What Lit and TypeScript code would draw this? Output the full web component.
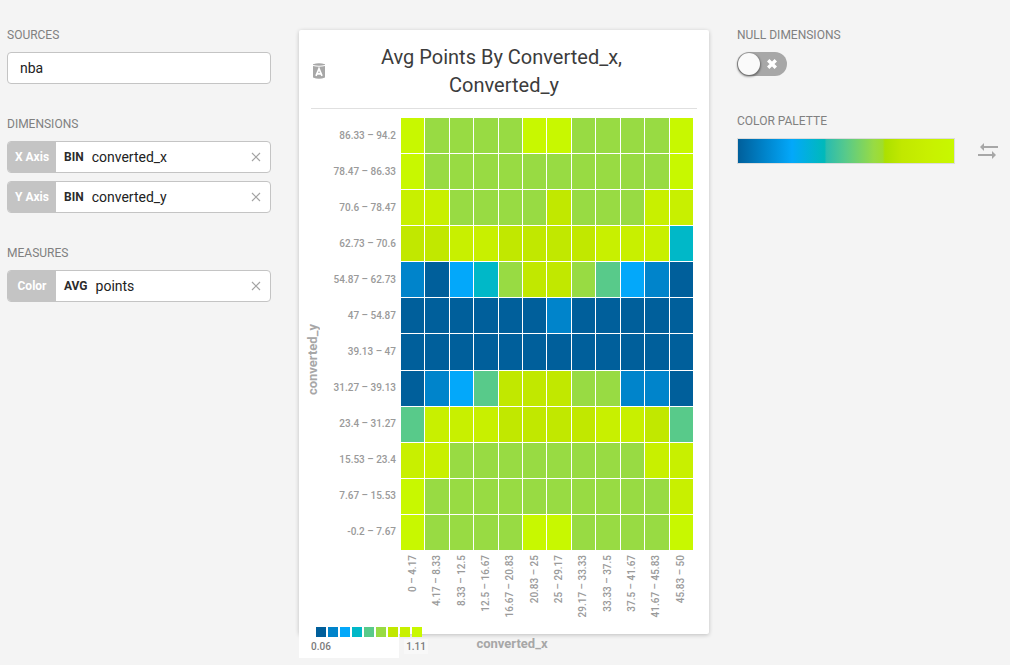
import { LitElement, html, css } from "lit";
import { customElement, property, state } from "lit/decorators.js";

const PALETTE = [
  "#005f9b", "#0084cb", "#03a8fa", "#00b8c8", "#58ca8a",
  "#98db43", "#c1e800", "#c8f000", "#c8f800",
];

// One digit per cell: the 1-based palette step, rows from top to bottom.
const ROWS = [
  { label: "86.33 – 94.2", cells: "966669966669" },
  { label: "78.47 – 86.33", cells: "966666666669" },
  { label: "70.6 – 78.47", cells: "886666766688" },
  { label: "62.73 – 70.6", cells: "778877778884" },
  { label: "54.87 – 62.73", cells: "213467765321" },
  { label: "47 – 54.87", cells: "111111211111" },
  { label: "39.13 – 47", cells: "111111111111" },
  { label: "31.27 – 39.13", cells: "123577766221" },
  { label: "23.4 – 31.27", cells: "588877778875" },
  { label: "15.53 – 23.4", cells: "886666666688" },
  { label: "7.67 – 15.53", cells: "966666666668" },
  { label: "-0.2 – 7.67", cells: "966669966669" },
];

const COLUMNS = [
  "0 – 4.17", "4.17 – 8.33", "8.33 – 12.5", "12.5 – 16.67", "16.67 – 20.83", "20.83 – 25",
  "25 – 29.17", "29.17 – 33.33", "33.33 – 37.5", "37.5 – 41.67", "41.67 – 45.83", "45.83 – 50",
];

@customElement("field-pill")
export class FieldPill extends LitElement {
  @property() role_ = "";
  @property() fn = "";
  @property() field = "";

  static styles = css`
    :host { display: block; }
    .pill {
      display: flex;
      align-items: stretch;
      box-sizing: border-box;
      height: 32px;
      border: 1px solid #c4c4c4;
      border-radius: 4px;
      overflow: hidden;
      background: #fff;
    }
    .tag {
      display: flex;
      align-items: center;
      justify-content: center;
      flex: none;
      width: 48px;
      background: #c4c4c4;
      color: #fff;
      font-size: 12px;
      font-weight: 700;
    }
    button { border: 0; padding: 0; background: none; font: inherit; color: inherit; cursor: pointer; }
    .fn { padding: 0 8px; font-size: 12px; font-weight: 700; color: #2b2b2b; }
    .field { flex: 1; text-align: left; font-size: 14px; color: #222; }
    .remove { display: flex; align-items: center; justify-content: center; width: 28px; }
    .remove svg { width: 10px; height: 10px; }
  `;

  render() {
    return html`
      <div class="pill">
        <span class="tag">${this.role_}</span>
        <button class="fn" type="button">${this.fn}</button>
        <button class="field" type="button">${this.field}</button>
        <button class="remove" type="button" aria-label="Remove ${this.field}">
          <svg viewBox="0 0 10 10" fill="none" stroke="#a4a4a4" stroke-width="1.2">
            <path d="M1 1l8 8M9 1l-8 8" />
          </svg>
        </button>
      </div>
    `;
  }
}

@customElement("heat-map")
export class HeatMap extends LitElement {
  static styles = css`
    :host { display: block; }
    .chart {
      display: grid;
      grid-template-columns: 16px 74px 1fr;
      padding-right: 4px;
    }
    .y-title {
      grid-row: 1 / 3;
      align-self: center;
      justify-self: center;
      margin-right: 12px;
      margin-bottom: 32px;
      writing-mode: vertical-rl;
      transform: rotate(180deg);
      font-size: 13px;
      line-height: 16px;
      font-weight: 700;
      color: #a7a7a7;
    }
    .y-ticks, .cells { display: grid; grid-template-rows: repeat(12, 1fr); height: 432px; }
    .y-ticks, .x-ticks {
      font-size: 10px;
      line-height: 12px;
      font-weight: 500;
      color: #9a9a9a;
      white-space: nowrap;
    }
    .y-ticks { justify-items: end; align-items: center; padding-right: 5px; }
    .cells, .x-ticks { grid-template-columns: repeat(12, 1fr); }
    .cells { gap: 1px; }
    .x-ticks { grid-column: 3; display: grid; height: 84px; justify-items: center; align-items: start; }
    .x-tick { margin-top: 5px; writing-mode: vertical-rl; transform: rotate(180deg); }
  `;

  render() {
    return html`
      <div class="chart">
        <div class="y-title">converted_y</div>
        <div class="y-ticks">${ROWS.map((r) => html`<span>${r.label}</span>`)}</div>
        <div class="cells">
          ${ROWS.map((r) =>
            [...r.cells].map((c) => html`<div style="background:${PALETTE[Number(c) - 1]}"></div>`)
          )}
        </div>
        <div class="x-ticks">${COLUMNS.map((c) => html`<span class="x-tick">${c}</span>`)}</div>
      </div>
    `;
  }
}

@customElement("app-root")
export class AppRoot extends LitElement {
  @state() private showNull = false;

  static styles = css`
    :host {
      display: block;
      box-sizing: border-box;
      min-height: 100vh;
      background: #f4f4f4;
      font-family: Roboto, "Liberation Sans", sans-serif;
      color: #222;
    }
    .page {
      display: grid;
      grid-template-columns: 264px minmax(0, 1fr) 273px;
      column-gap: 28px;
      padding-left: 7px;
      align-items: start;
    }
    .side { display: flex; flex-direction: column; gap: 32px; padding-top: 27px; }
    .options { gap: 37px; }
    .section { display: flex; flex-direction: column; gap: 8px; }
    .heading {
      margin: 0 0 1px;
      font-size: 12px;
      line-height: 16px;
      font-weight: 400;
      color: #808080;
      text-transform: uppercase;
    }
    .source {
      box-sizing: border-box;
      width: 100%;
      height: 32px;
      padding: 0 12px;
      border: 1px solid #c4c4c4;
      border-radius: 4px;
      background: #fff;
      font: 14px Roboto, "Liberation Sans", sans-serif;
      color: #222;
    }
    .card {
      position: relative;
      margin-top: 30px;
      padding: 13px 12px 0;
      border-radius: 2px;
      background: #fff;
      box-shadow: 0 1px 4px rgba(0, 0, 0, 0.22);
    }
    .head {
      display: grid;
      grid-template-columns: 16px 1fr 16px;
      align-items: center;
      padding-bottom: 9px;
      margin-bottom: 9px;
      border-bottom: 1px solid #e0e0e0;
    }
    .title {
      margin: 0 36px;
      font-size: 20px;
      line-height: 28px;
      font-weight: 400;
      text-align: center;
      white-space: break-spaces;
      color: #3c3c3c;
    }
    .auto { display: flex; justify-content: center; border: 0; padding: 0; background: none; }
    .auto svg { width: 12px; height: 16px; }
    .legend {
      position: absolute;
      left: 0;
      bottom: -24px;
      width: 130px;
      background: linear-gradient(#fff, #fff) 0 0 / 100px 100% no-repeat;
      font-size: 10px;
      line-height: 15px;
      font-weight: 500;
      color: #7a7a7a;
    }
    .swatches { display: flex; gap: 2px; padding: 3px 0 2px 17px; }
    .swatch { width: 10px; height: 10px; }
    .range { display: flex; justify-content: space-between; padding: 0 1px 4px 12px; }
    .max { padding: 0 2px; background: #f8f8f8; }
    .x-title {
      margin: 2px 0 0 16px;
      font-size: 13px;
      line-height: 16px;
      font-weight: 700;
      text-align: center;
      color: #a7a7a7;
    }
    .switch { position: relative; display: block; width: 50px; height: 24px; }
    .switch input { position: absolute; inset: 0; margin: 0; opacity: 0; cursor: pointer; }
    .track {
      display: flex;
      align-items: center;
      justify-content: space-between;
      box-sizing: border-box;
      height: 24px;
      padding: 0 10px 0 1px;
      border-radius: 12px;
      background: #a7a7a7;
    }
    input:checked + .track { flex-direction: row-reverse; padding: 0 1px 0 10px; }
    .knob {
      width: 22px;
      height: 22px;
      border-radius: 50%;
      background: #fafafa;
      box-shadow: 0 1px 2px 1px rgba(0, 0, 0, 0.35);
    }
    .track svg { width: 10px; height: 10px; }
    .palette-row { display: flex; align-items: center; gap: 22px; }
    .palette {
      box-sizing: border-box;
      width: 218px;
      height: 26px;
      padding: 0;
      border: 1px solid #dcdcdc;
      background: linear-gradient(
        90deg, #005f9b, #0084cb 12.5%, #03a8fa 25%, #00b9ba 40%, #2abcaf 41%,
        #58ca8a 50%, #98db43 63%, #a0dd2c 67%, #ace000 68%, #c1e800 76%, #c8f000 88%, #c8f800
      );
    }
    .swap { display: flex; border: 0; padding: 0; background: none; cursor: pointer; }
    .swap svg { width: 22px; height: 18px; }
  `;

  render() {
    return html`
      <div class="page">
        <aside class="side">
          <section class="section">
            <label class="heading" for="source">Sources</label>
            <input class="source" id="source" type="text" value="nba" />
          </section>
          <section class="section">
            <h2 class="heading">Dimensions</h2>
            <field-pill .role_=${"X Axis"} .fn=${"BIN"} .field=${"converted_x"}></field-pill>
            <field-pill .role_=${"Y Axis"} .fn=${"BIN"} .field=${"converted_y"}></field-pill>
          </section>
          <section class="section">
            <h2 class="heading">Measures</h2>
            <field-pill .role_=${"Color"} .fn=${"AVG"} .field=${"points"}></field-pill>
          </section>
        </aside>

        <main>
          <div class="card">
            <header class="head">
              <button class="auto" type="button" aria-label="Source A">
                <svg viewBox="0 0 12 16">
                  <path fill="#a7a7a7" d="M0 2.9Q6 4.4 12 2.9V14.6Q6 17 0 14.6Z" />
                  <path fill="#a7a7a7" d="M0 1.2Q6-.8 12 1.2V2Q6 3.5 0 2Z" />
                  <path fill="none" stroke="#fff" stroke-width="1.7" d="M3 12.8L6 5.6L9 12.8M4.2 10.8H7.8" />
                </svg>
              </button>
              <h1 class="title">Avg Points By Converted_x, Converted_y</h1>
            </header>
            <heat-map></heat-map>
            <div class="legend">
              <div class="swatches">
                ${PALETTE.map((c) => html`<span class="swatch" style="background:${c}"></span>`)}
              </div>
              <div class="range"><span>0.06</span><span class="max">1.11</span></div>
            </div>
          </div>
          <div class="x-title">converted_x</div>
        </main>

        <aside class="side options">
          <section class="section">
            <label class="heading" for="nulls">Null Dimensions</label>
            <div class="switch">
              <input
                id="nulls"
                type="checkbox"
                .checked=${this.showNull}
                @change=${(e: Event) => (this.showNull = (e.target as HTMLInputElement).checked)}
              />
              <div class="track">
                <span class="knob"></span>
                <svg viewBox="0 0 10 10" stroke="#fff" stroke-width="3.4">
                  <path d="M1.2 1.2L8.8 8.8M8.8 1.2L1.2 8.8" />
                </svg>
              </div>
            </div>
          </section>
          <section class="section">
            <h2 class="heading">Color Palette</h2>
            <div class="palette-row">
              <button class="palette" type="button" aria-label="Choose palette"></button>
              <button class="swap" type="button" aria-label="Reverse palette">
                <svg viewBox="0 0 22 18" fill="#a7a7a7">
                  <path d="M3 5L7 1V4H21V6H7V9Z" />
                  <path d="M19 13L15 9V12H1V14H15V17Z" />
                </svg>
              </button>
            </div>
          </section>
        </aside>
      </div>
    `;
  }
}
